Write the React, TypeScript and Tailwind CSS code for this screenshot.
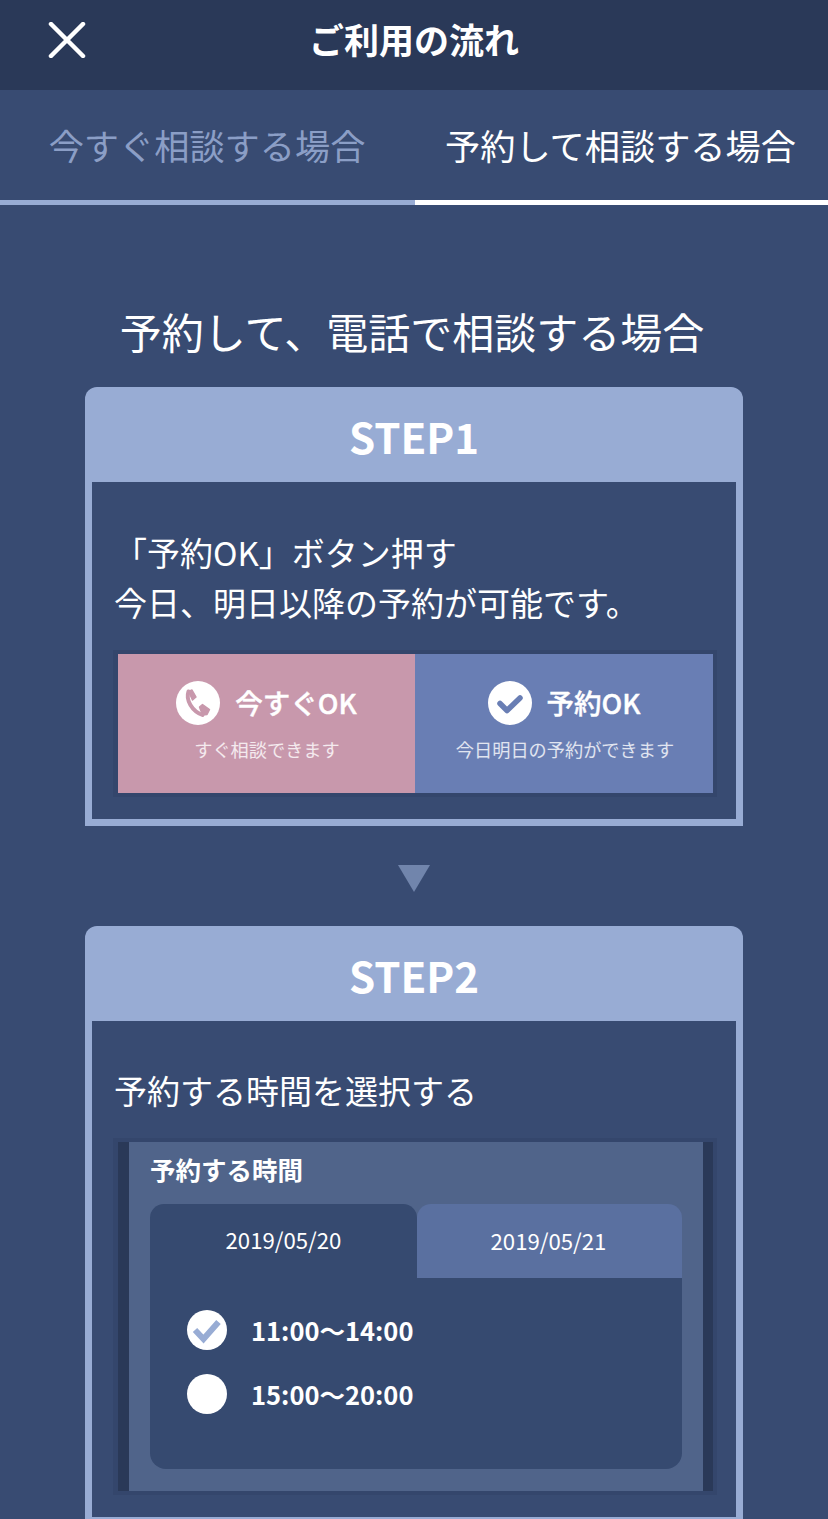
export default function App() {
  const font = { fontFamily: '"Noto Sans CJK JP", "Noto Sans", sans-serif' };
  return (
    <div style={font} className="w-[828px] h-[1519px] overflow-hidden bg-[#384b72] text-white">
      <header className="h-[90px] bg-[#2a3958] flex items-center justify-center relative">
        <svg className="absolute left-[48px] top-[22px]" width="38" height="36" viewBox="0 0 38 36" fill="none">
          <path d="M3 2 L35 34 M35 2 L3 34" stroke="#fff" strokeWidth="4.5" strokeLinecap="round" />
        </svg>
        <h1 className="text-[35px] leading-none font-bold -mt-[13px]">ご利用の流れ</h1>
      </header>
      <nav className="flex h-[115px]">
        <div className="w-[415px] border-b-[5px] border-[#98acd4] flex items-center justify-center text-[#8b9ec6] text-[35.200px] pr-[1px]">
          今すぐ相談する場合
        </div>
        <div className="w-[413px] border-b-[5px] border-white flex items-center justify-center text-[35.200px] pr-[2px]">
          予約して相談する場合
        </div>
      </nav>
      <main className="flex flex-col items-center">
        <h2 className="text-[42px] leading-[60px] mt-[96px] mb-[26px] pr-[4px]">予約して、電話で相談する場合</h2>
        <section className="w-[658px] h-[439px] rounded-t-[12px] bg-[#98acd4] px-[7px] pb-[7px] flex flex-col">
          <div className="h-[95px] pt-[2px] flex items-center justify-center text-[42px] font-bold">STEP1</div>
          <div className="flex-1 bg-[#384b72] pl-[21px] pt-[45px]">
            <p className="text-[33px] leading-[50px] pl-[1px]">「予約OK」ボタン押す<br />今日、明日以降の予約が可能です。</p>
            <div className="mt-[23px] w-[604px] h-[147px] bg-[#34466c] pl-[5px] pr-[4px] py-[4px] flex">
              <div className="w-[297px] bg-[#c898ac] flex flex-col items-center pt-[26px]">
                <div className="flex items-center gap-[15px] h-[46px]">
                  <svg width="44" height="44" viewBox="0 0 44 44">
                    <circle cx="22" cy="22" r="22" fill="#fff" />
                    <path d="M12.500 10.500 C9.500 19 16 30 26.500 34" fill="none" stroke="#c898ac" strokeWidth="4" strokeLinecap="round" />
                    <path d="M12.500 10.500 L16 9 L20 16 L16.500 19 Z" fill="#c898ac" stroke="#c898ac" strokeWidth="1.500" strokeLinejoin="round" />
                    <path d="M23.500 26 L26.500 23.500 L33.500 28.500 L31 33.500 L26.500 34 Z" fill="#c898ac" stroke="#c898ac" strokeWidth="1.500" strokeLinejoin="round" />
                  </svg>
                  <span className="text-[27.500px] leading-none font-medium [-webkit-text-stroke:0.4px_white]">今すぐOK</span>
                </div>
                <span className="text-[18.200px] leading-none mt-[14px] pl-[1px] text-white/80">すぐ相談できます</span>
              </div>
              <div className="w-[298px] bg-[#697eb4] flex flex-col items-center pt-[26px]">
                <div className="flex items-center gap-[15px] h-[46px]">
                  <svg width="44" height="44" viewBox="0 0 44 44">
                    <circle cx="22" cy="22" r="22" fill="#fff" />
                    <path d="M12 22.500 L19 29.500 L32 17" fill="none" stroke="#697eb4" strokeWidth="5.500" strokeLinecap="round" strokeLinejoin="round" />
                  </svg>
                  <span className="text-[27.500px] leading-none font-medium [-webkit-text-stroke:0.4px_white]">予約OK</span>
                </div>
                <span className="text-[18.200px] leading-none mt-[14px] pl-[2px] text-white/80">今日明日の予約ができます</span>
              </div>
            </div>
          </div>
        </section>
        <svg className="mt-[39px] mb-[34px]" width="32" height="27" viewBox="0 0 32 27">
          <path d="M0 0 H32 L16 27 Z" fill="#7185ac" />
        </svg>
        <section className="w-[658px] h-[598px] rounded-t-[12px] bg-[#98acd4] px-[7px] pb-[7px] flex flex-col shrink-0">
          <div className="h-[95px] pt-[2px] flex items-center justify-center text-[42px] font-bold">STEP2</div>
          <div className="flex-1 bg-[#384b72] pl-[21px] pt-[44px]">
            <p className="text-[33px] leading-[50px] pl-[1px]">予約する時間を選択する</p>
            <div className="mt-[23px] w-[604px] h-[357px] bg-[#34466c] pl-[5px] pr-[4px] py-[4px]">
              <div className="h-full bg-[#2a3958] pl-[11px] pr-[10px]">
                <div className="h-full bg-[#50648a] px-[21px] pt-[9px]">
                  <h3 className="text-[25.500px] leading-[36px] font-bold">予約する時間</h3>
                  <div className="mt-[17px] h-[265px] flex flex-col">
                    <div className="flex h-[74px]">
                      <div className="w-[267px] rounded-t-[14px] bg-[#364a70] flex items-center justify-center text-[22.200px] pb-[2px]">2019/05/20</div>
                      <div className="w-[265px] rounded-t-[14px] bg-[#5a70a0] flex items-center justify-center text-[22.200px] pr-[2px]">2019/05/21</div>
                    </div>
                    <div className="flex-1 rounded-b-[16px] bg-[#364a70] pl-[37px] pt-[32px] flex flex-col gap-[24px]">
                      <div className="flex items-center gap-[24px] h-[40px]">
                        <svg width="40" height="40" viewBox="0 0 40 40">
                          <circle cx="20" cy="20" r="20" fill="#fff" />
                          <path d="M8 20 l8.500 9 l15 -17" fill="none" stroke="#98acd4" strokeWidth="6" />
                        </svg>
                        <span className="text-[25.500px] leading-none font-bold mb-[1px]">11:00〜14:00</span>
                      </div>
                      <div className="flex items-center gap-[24px] h-[40px]">
                        <span className="w-[40px] h-[40px] rounded-full bg-white" />
                        <span className="text-[25.500px] leading-none font-bold mb-[1px]">15:00〜20:00</span>
                      </div>
                    </div>
                  </div>
                </div>
              </div>
            </div>
          </div>
        </section>
      </main>
    </div>
  );
}
